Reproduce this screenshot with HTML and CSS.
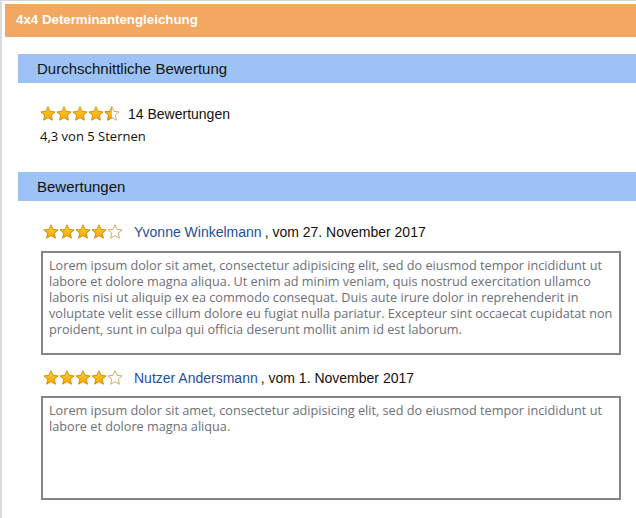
FILE: index.html
```html
<!DOCTYPE html>
<html lang="de">
<head>
<meta charset="utf-8">
<title>4x4 Determinantengleichung</title>
<link rel="stylesheet" href="styles.css">
</head>
<body>
<svg width="0" height="0" class="defs">
  <defs>
    <linearGradient id="gold" x1="0" y1="0" x2="0" y2="1">
      <stop offset="0" stop-color="#ffd23a"/>
      <stop offset="1" stop-color="#f4a300"/>
    </linearGradient>
    <symbol id="star" viewBox="0 0 16 16">
      <path d="M8 0.8 L10.1 5.4 L15.1 5.9 L11.3 9.2 L12.4 14.2 L8 11.6 L3.6 14.2 L4.7 9.2 L0.9 5.9 L5.9 5.4 Z" fill="url(#gold)" stroke="#c98a00" stroke-width="0.9" stroke-linejoin="round"/>
    </symbol>
    <symbol id="star-empty" viewBox="0 0 16 16">
      <path d="M8 0.8 L10.1 5.4 L15.1 5.9 L11.3 9.2 L12.4 14.2 L8 11.6 L3.6 14.2 L4.7 9.2 L0.9 5.9 L5.9 5.4 Z" fill="#fff" stroke="#c9a05a" stroke-width="0.9" stroke-linejoin="round"/>
    </symbol>
    <clipPath id="halfclip"><rect x="0" y="0" width="8" height="16"/></clipPath>
    <symbol id="star-half" viewBox="0 0 16 16">
      <path d="M8 0.8 L10.1 5.4 L15.1 5.9 L11.3 9.2 L12.4 14.2 L8 11.6 L3.6 14.2 L4.7 9.2 L0.9 5.9 L5.9 5.4 Z" fill="#fff" stroke="#c9a05a" stroke-width="0.9" stroke-linejoin="round"/>
      <path clip-path="url(#halfclip)" d="M8 0.8 L10.1 5.4 L15.1 5.9 L11.3 9.2 L12.4 14.2 L8 11.6 L3.6 14.2 L4.7 9.2 L0.9 5.9 L5.9 5.4 Z" fill="url(#gold)" stroke="#c98a00" stroke-width="0.9" stroke-linejoin="round"/>
    </symbol>
  </defs>
</svg>
<div class="window">
  <div class="titlebar">4x4 Determinantengleichung</div>

  <div class="section-head">Durchschnittliche Bewertung</div>
  <div class="summary">
    <div class="rating-row">
      <span class="stars">
        <svg class="star"><use href="#star"/></svg><svg class="star"><use href="#star"/></svg><svg class="star"><use href="#star"/></svg><svg class="star"><use href="#star"/></svg><svg class="star"><use href="#star-half"/></svg>
      </span>
      <span class="count">14 Bewertungen</span>
    </div>
    <div class="avg">4,3 von 5 Sternen</div>
  </div>

  <div class="section-head second">Bewertungen</div>

  <div class="review">
    <div class="review-meta">
      <span class="stars">
        <svg class="star"><use href="#star"/></svg><svg class="star"><use href="#star"/></svg><svg class="star"><use href="#star"/></svg><svg class="star"><use href="#star"/></svg><svg class="star"><use href="#star-empty"/></svg>
      </span>
      <span class="author">Yvonne Winkelmann</span><span class="date">, vom 27. November 2017</span>
    </div>
    <div class="review-text">Lorem ipsum dolor sit amet, consectetur adipisicing elit, sed do eiusmod tempor incididunt ut labore et dolore magna aliqua. Ut enim ad minim veniam, quis nostrud exercitation ullamco laboris nisi ut aliquip ex ea commodo consequat. Duis aute irure dolor in reprehenderit in voluptate velit esse cillum dolore eu fugiat nulla pariatur. Excepteur sint occaecat cupidatat non proident, sunt in culpa qui officia deserunt mollit anim id est laborum.</div>
  </div>

  <div class="review">
    <div class="review-meta">
      <span class="stars">
        <svg class="star"><use href="#star"/></svg><svg class="star"><use href="#star"/></svg><svg class="star"><use href="#star"/></svg><svg class="star"><use href="#star"/></svg><svg class="star"><use href="#star-empty"/></svg>
      </span>
      <span class="author">Nutzer Andersmann</span><span class="date">, vom 1. November 2017</span>
    </div>
    <div class="review-text">Lorem ipsum dolor sit amet, consectetur adipisicing elit, sed do eiusmod tempor incididunt ut labore et dolore magna aliqua.</div>
  </div>
</div>
</body>
</html>
```

FILE: styles.css
```css
html, body {
  margin: 0;
  padding: 0;
  background: #fff;
}
body {
  font-family: "Open Sans", "DejaVu Sans", sans-serif;
  color: #111;
  width: 636px;
  height: 518px;
  overflow: hidden;
}
.defs {
  position: absolute;
  width: 0;
  height: 0;
}
.window {
  box-sizing: border-box;
  height: 518px;
  border-top: 1px solid #d4d4d4;
  border-left: 2px solid #dcdcdc;
  padding: 3px 0 0 3px;
}
.titlebar {
  background: #f3a862;
  color: #fff;
  font-family: "Liberation Sans", Arial, sans-serif;
  font-weight: 700;
  font-size: 13.3px;
  height: 33px;
  line-height: 31px;
  padding-left: 11px;
}
.section-head {
  margin: 17px 0 0 13px;
  background: #9dc3f6;
  height: 29px;
  line-height: 30px;
  font-family: "Liberation Sans", Arial, sans-serif;
  font-size: 15px;
  padding-left: 19px;
  color: #111;
}
.section-head.second {
  margin-top: 27px;
}
.summary {
  padding: 22px 0 0 35px;
  font-size: 13px;
}
.rating-row {
  display: flex;
  align-items: center;
  height: 18px;
}
.stars {
  display: inline-flex;
}
.star {
  width: 16px;
  height: 16px;
  display: block;
}
.count {
  margin-left: 8px;
  font-family: "Liberation Sans", Arial, sans-serif;
  font-size: 14px;
}
.avg {
  margin-top: 4px;
  font-size: 13px;
}
.review {
  padding: 22px 15px 0 36px;
}
.review + .review {
  padding-top: 14px;
}
.review-meta {
  display: flex;
  align-items: center;
  height: 18px;
  padding-left: 2px;
  font-family: "Liberation Sans", Arial, sans-serif;
  font-size: 14px;
}
.review-meta .stars {
  margin-right: 11px;
}
.author {
  color: #1f4f9c;
  margin-right: 3px;
}
.date {
  color: #111;
}
.review-text {
  margin-top: 10px;
  box-sizing: border-box;
  height: 104px;
  border: 2px solid #85848d;
  padding: 4px 4px 4px 6px;
  font-size: 12.7px;
  line-height: 16px;
  color: #6e6e7a;
}
.review + .review .review-text {
  margin-top: 9px;
}
```
